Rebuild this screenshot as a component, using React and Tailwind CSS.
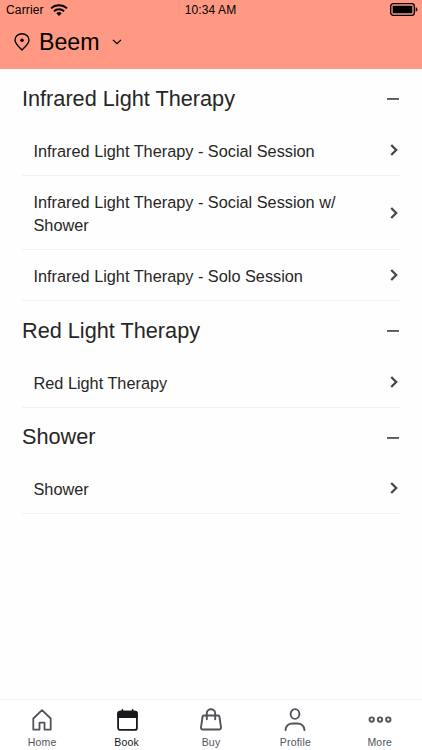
const sections = [
  {
    title: 'Infrared Light Therapy',
    items: [
      'Infrared Light Therapy - Social Session',
      'Infrared Light Therapy - Social Session w/ Shower',
      'Infrared Light Therapy - Solo Session',
    ],
  },
  { title: 'Red Light Therapy', items: ['Red Light Therapy'] },
  { title: 'Shower', items: ['Shower'] },
];

function HomeIcon() {
  return (
    <svg className="w-6 h-6" viewBox="0 0 24 24" fill="none" stroke="currentColor" strokeWidth="1.8" strokeLinejoin="round">
      <path d="M3.3 10.5 12 2.2l8.7 8.3v11.1h-6.2v-6.9h-5v6.9H3.3z" />
    </svg>
  );
}

function BookIcon() {
  return (
    <svg className="w-6 h-6" viewBox="0 0 24 24" fill="none" stroke="currentColor" strokeWidth="1.8" strokeLinecap="round">
      <rect x="3.1" y="3.7" width="18.8" height="18.2" rx="2" />
      <path d="M3.1 9V5.6q0-1.9 2-1.9h14.8q2 0 2 1.9V9z" fill="currentColor" />
      <path d="M7.4 2v2.4M17.6 2v2.4" />
    </svg>
  );
}

function BuyIcon() {
  return (
    <svg className="w-6 h-6" viewBox="0 0 24 24" fill="none" stroke="currentColor" strokeWidth="1.9" strokeLinecap="round" strokeLinejoin="round">
      <path d="M4.8 7.5h14.4q1 0 1.2 1L22 19.4q.2 2.1-1.9 2.1H3.9q-2.1 0-1.9-2.1L3.6 8.5q.2-1 1.2-1z" />
      <path d="M7.8 11.2V5.2a4.2 4 0 0 1 8.4 0v6" />
    </svg>
  );
}

function ProfileIcon() {
  return (
    <svg className="w-6 h-6" viewBox="0 0 24 24" fill="none" stroke="currentColor" strokeWidth="1.9" strokeLinecap="round">
      <ellipse cx="12" cy="6" rx="4.4" ry="4.9" />
      <path d="M2.5 22.1c.3-4 3.100-6.600 7-6.600h5c3.900 0 6.700 2.600 7 6.600" />
    </svg>
  );
}

function MoreIcon() {
  return (
    <svg className="w-6 h-6" viewBox="0 0 24 24" fill="none" stroke="currentColor" strokeWidth="1.9">
      <circle cx="3.7" cy="11.6" r="2.2" />
      <circle cx="12" cy="11.6" r="2.2" />
      <circle cx="20.3" cy="11.6" r="2.2" />
    </svg>
  );
}

const tabs = [
  { label: 'Home', icon: HomeIcon },
  { label: 'Book', icon: BookIcon, active: true },
  { label: 'Buy', icon: BuyIcon },
  { label: 'Profile', icon: ProfileIcon },
  { label: 'More', icon: MoreIcon },
];

function StatusBar() {
  return (
    <div className="grid grid-cols-3 items-center h-5 pl-[6px] pr-1 text-[12px]">
      <div className="flex items-center gap-[6px]">
        <span className="tracking-[0.15px]">Carrier</span>
        <svg className="w-[18px] h-3" viewBox="0 0 18 12" fill="none" stroke="currentColor" strokeWidth="1.9">
          <path d="M1 4.400a11.700 11.700 0 0 1 16 0" />
          <path d="M3.900 7.200a7.500 7.500 0 0 1 10.200 0" />
          <path d="M9 11.900 6.300 9.200a3.900 3.900 0 0 1 5.400 0z" fill="currentColor" stroke="none" />
        </svg>
      </div>
      <span className="pr-[3px] -mt-px text-center whitespace-nowrap tracking-[0.1px]">10:34 AM</span>
      <svg className="w-7 h-[13px] -mt-px justify-self-end" viewBox="0 0 28 13" fill="currentColor">
        <rect x="0.7" y="0.7" width="23.6" height="11.6" rx="2.6" fill="none" stroke="currentColor" strokeWidth="1.3" />
        <rect x="2.7" y="2.7" width="19.6" height="7.6" rx="0.6" />
        <path d="M25.7 4.200q1.800.6 1.800 2.300t-1.800 2.300z" />
      </svg>
    </div>
  );
}

function Header() {
  return (
    <header className="h-[69px] shrink-0 bg-[#ff9983] text-black">
      <StatusBar />
      <div className="flex items-center h-[46px] pl-[14px]">
        <svg className="w-4 h-[18px] mb-[3px]" viewBox="0 0 16 18" fill="none" stroke="currentColor" strokeWidth="1.4">
          <path d="M8 16.900C5.600 14.600 1 10.600 1 7.200a7 6.500 0 0 1 14 0c0 3.400-4.600 7.400-7 9.700z" strokeLinejoin="round" />
          <circle cx="8" cy="7.300" r="1.700" fill="currentColor" stroke="none" />
        </svg>
        <h1 className="ml-[9px] text-[23.2px] leading-none">Beem</h1>
        <svg className="ml-3 mb-[2px] w-[10px] h-[6px]" viewBox="0 0 10 6" fill="none" stroke="currentColor" strokeWidth="1.3">
          <path d="m1 .9 4 3.800L9 .9" />
        </svg>
      </div>
    </header>
  );
}

function Section({ title, items }) {
  return (
    <section>
      <div className="flex items-center justify-between h-[55px] pt-1 pr-[1px]">
        <h2 className="text-[21.7px] leading-none">{title}</h2>
        <svg className="w-3 h-[2px] mt-px" viewBox="0 0 12 2" fill="#303030">
          <rect y="0.2" width="12" height="1.5" />
        </svg>
      </div>
      <ul>
        {items.map((item) => (
          <li key={item} className="flex items-center justify-between pl-[11.5px] pr-[2px] border-b border-[#f1f1f1]">
            <span className="w-[320px] pt-[15.5px] pb-[12.5px] text-[16.3px] leading-[22.5px]">{item}</span>
            <svg className="w-2 h-3 mt-px" viewBox="0 0 8 12" fill="none" stroke="#48484a" strokeWidth="2.3">
              <path d="m1.200 1 5 5-5 5" />
            </svg>
          </li>
        ))}
      </ul>
    </section>
  );
}

function TabBar() {
  return (
    <nav className="grid grid-cols-5 h-[51px] shrink-0 border-t border-[#f3f3f3] bg-white">
      {tabs.map(({ label, icon: Icon, active }) => (
        <button
          key={label}
          type="button"
          className={`flex flex-col items-center pt-2 ${active ? 'text-[#17191c]' : 'text-[#50535a]'}`}
        >
          <Icon />
          <span className="mt-1 text-[10.5px] leading-3 tracking-[0.2px]">{label}</span>
        </button>
      ))}
    </nav>
  );
}

export default function App() {
  return (
    <div className="flex flex-col w-full h-screen overflow-hidden bg-[#fefefe] text-[#262626] font-['Liberation_Sans',Arial,sans-serif]">
      <Header />
      <main className="flex-1 px-[22px]">
        {sections.map((section) => (
          <Section key={section.title} {...section} />
        ))}
      </main>
      <TabBar />
    </div>
  );
}
